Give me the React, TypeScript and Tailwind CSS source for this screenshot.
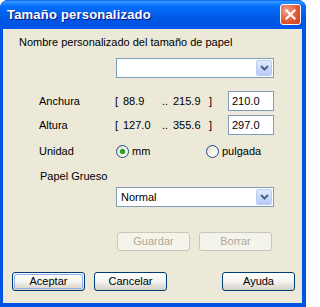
import React from "react";

const font = { fontFamily: '"Liberation Sans", Arial, sans-serif' };

function Arrow() {
  return (
    <svg width="9" height="6" viewBox="0 0 9 6">
      <path d="M1 1 L4.5 4.5 L8 1" stroke="#4d6185" strokeWidth="2" fill="none" />
    </svg>
  );
}

function Combo({ value }: { value?: string }) {
  return (
    <div className="ml-[113px] flex h-[20px] w-[158px] items-center border border-[#7f9db9] bg-white p-px">
      <span className="flex-1 pl-[3px] text-[11px] leading-[13px] text-black">{value}</span>
      <div className="flex h-full w-[16px] items-center justify-center rounded-[2px] border border-[#b9ccf5] bg-gradient-to-b from-[#e2ebfd] to-[#b7cbf8]">
        <Arrow />
      </div>
    </div>
  );
}

function Radio({ checked }: { checked?: boolean }) {
  return (
    <div className="flex h-[13px] w-[13px] items-center justify-center rounded-full border border-[#1c5180] bg-gradient-to-br from-[#dcd9cf] via-[#f4f3ee] to-white">
      {checked && <div className="h-[5px] w-[5px] rounded-full bg-[#21a121] shadow-[0_0_1px_#5fd35f]" />}
    </div>
  );
}

function Btn({ label, disabled, primary }: { label: string; disabled?: boolean; primary?: boolean }) {
  if (disabled) {
    return (
      <div className="flex h-[19px] w-[73px] items-center justify-center rounded-[3px] border border-[#c9c7ba] bg-[#f5f4ea] text-[11px] text-[#aca899]">
        {label}
      </div>
    );
  }
  return (
    <div className="flex h-[19px] w-[73px] items-center justify-center rounded-[3px] border border-[#003c74] bg-gradient-to-b from-white via-[#f3f3ef] to-[#d6d0c5] p-px text-[11px] text-black">
      <div
        className={
          "flex h-full w-full items-center justify-center rounded-[2px] " +
          (primary ? "border border-[#8fb0e8]" : "")
        }
      >
        {label}
      </div>
    </div>
  );
}

function SizeRow({ label, min, max, value }: { label: string; min: string; max: string; value: string }) {
  return (
    <div className="ml-[36px] flex h-[20px] items-center text-[11px] leading-[13px] text-black">
      <span className="w-[76px]">{label}</span>
      <span className="w-[8px]">[</span>
      <span className="w-[39px]">{min}</span>
      <span className="w-[11px]">..</span>
      <span className="w-[36px]">{max}</span>
      <span className="w-[19px]">]</span>
      <div className="flex h-[20px] w-[46px] items-center border border-[#7f9db9] bg-white pl-[3px]">{value}</div>
    </div>
  );
}

export default function App() {
  return (
    <div className="h-[307px] w-[306px] overflow-hidden rounded-t-[8px] bg-[#0054e3]" style={font}>
      <div className="flex h-[29px] items-center justify-between bg-[linear-gradient(to_bottom,#0058ee_0%,#3593ff_5%,#288eff_10%,#127dff_15%,#036ffc_22%,#0262ee_45%,#0057e5_65%,#0054e3_85%,#0055eb_93%,#005bf5_100%)] pl-[7px] pr-[5px]">
        <span className="text-[13px] font-bold tracking-[0.2px] text-white [text-shadow:1px_1px_0_#0a1883]">
          Tamaño personalizado
        </span>
        <div className="flex h-[21px] w-[21px] items-center justify-center rounded-[3px] border border-white bg-[radial-gradient(circle_at_30%_30%,#f0a08a,#e0552f_60%,#c8401f)]">
          <svg width="11" height="11" viewBox="0 0 11 11">
            <path d="M1.5 1.5 L9.5 9.5 M9.5 1.5 L1.5 9.5" stroke="white" strokeWidth="2.2" strokeLinecap="square" />
          </svg>
        </div>
      </div>
      <div className="ml-[3px] mr-[4px] flex h-[274px] flex-col bg-[#ece9d8] text-[11px] leading-[13px] text-black">
        <div className="ml-[16px] mt-[7px]">Nombre personalizado del tamaño de papel</div>
        <div className="mt-[9px]">
          <Combo />
        </div>
        <div className="mt-[13px]">
          <SizeRow label="Anchura" min="88.9" max="215.9" value="210.0" />
        </div>
        <div className="mt-[4px]">
          <SizeRow label="Altura" min="127.0" max="355.6" value="297.0" />
        </div>
        <div className="ml-[36px] mt-[10px] flex h-[13px] items-center">
          <span className="w-[77px]">Unidad</span>
          <div className="flex w-[90px] items-center gap-[3px]">
            <Radio checked />
            <span>mm</span>
          </div>
          <div className="flex items-center gap-[3px]">
            <Radio />
            <span>pulgada</span>
          </div>
        </div>
        <div className="ml-[37px] mt-[12px]">Papel Grueso</div>
        <div className="mt-[4px]">
          <Combo value="Normal" />
        </div>
        <div className="ml-[114px] mt-[25px] flex gap-[9px]">
          <Btn label="Guardar" disabled />
          <Btn label="Borrar" disabled />
        </div>
        <div className="ml-[9px] mt-[21px] flex">
          <Btn label="Aceptar" primary />
          <div className="ml-[9px]">
            <Btn label="Cancelar" />
          </div>
          <div className="ml-[55px]">
            <Btn label="Ayuda" />
          </div>
        </div>
      </div>
    </div>
  );
}
